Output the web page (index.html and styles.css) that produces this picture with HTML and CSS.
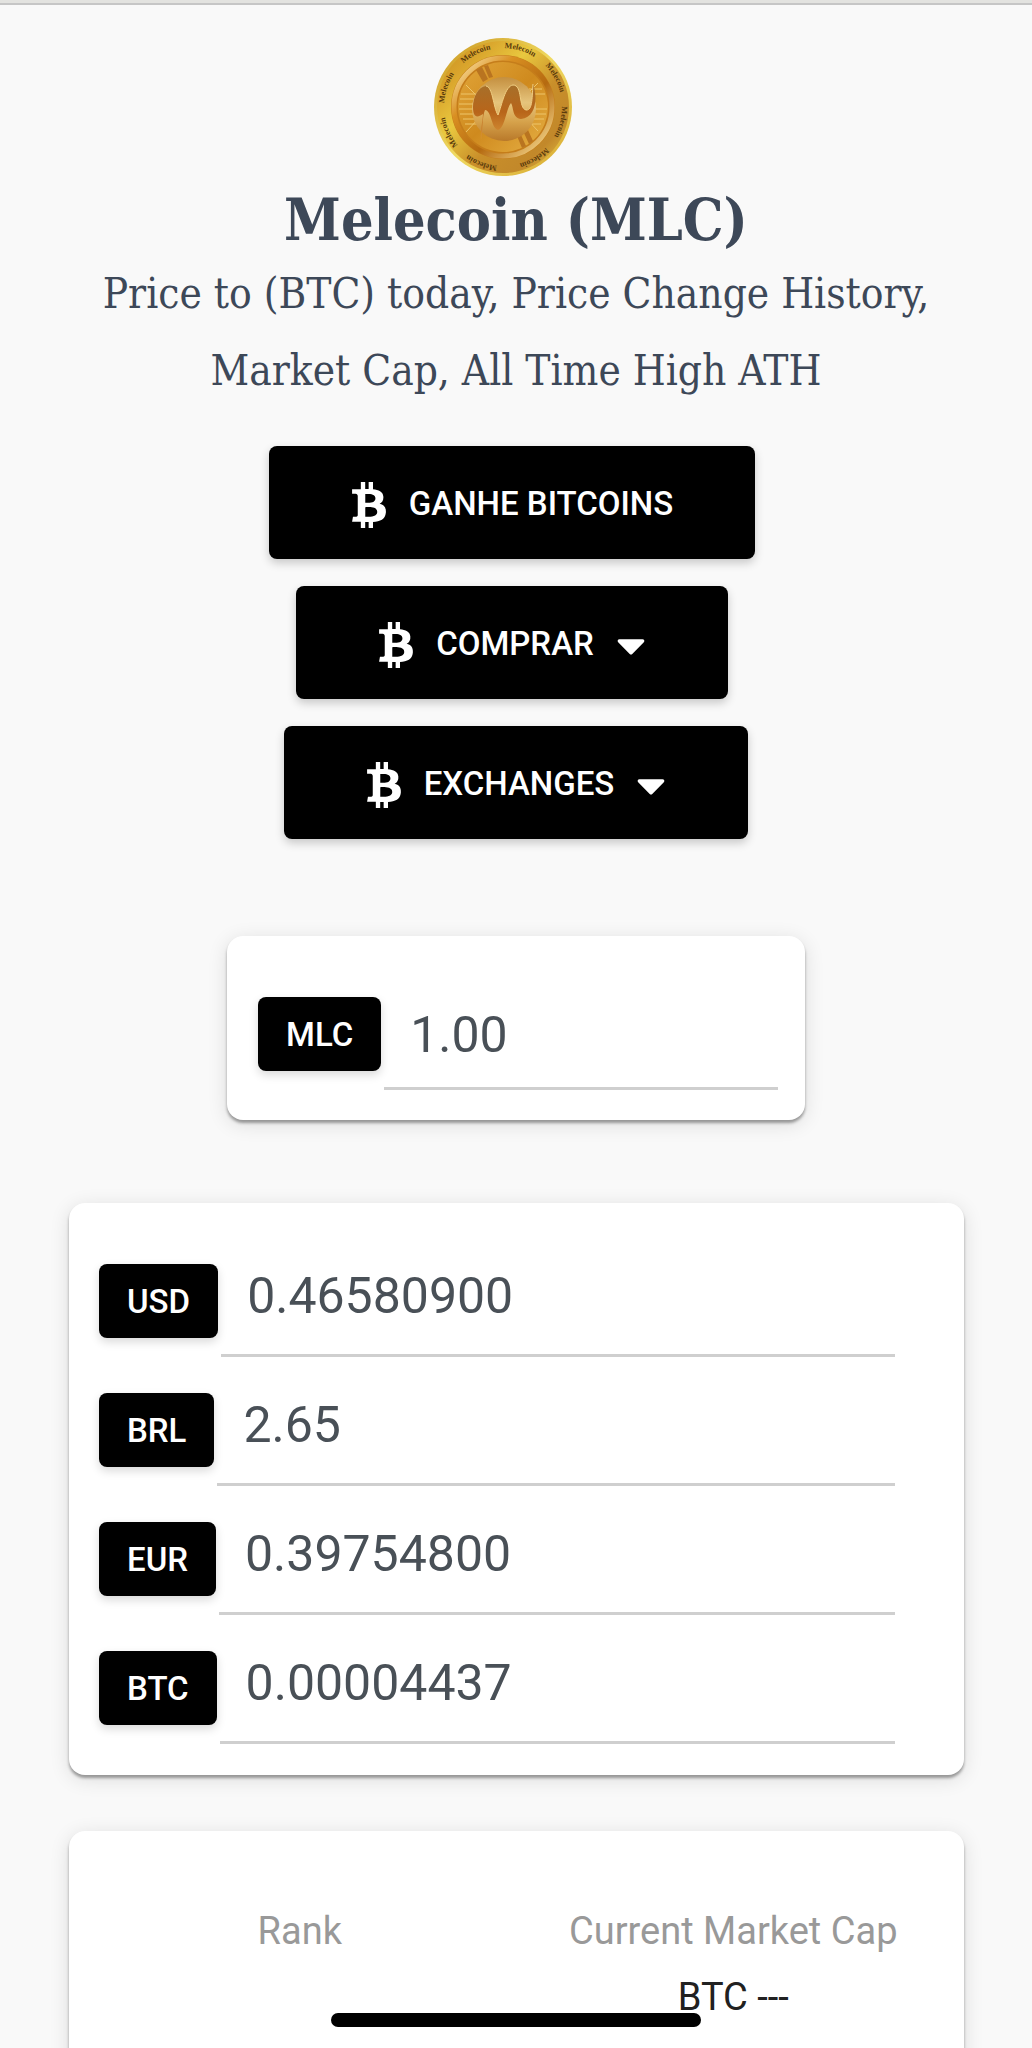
FILE: index.html
```html
<!DOCTYPE html>
<html lang="en">
<head>
<meta charset="utf-8">
<meta name="viewport" content="width=device-width, initial-scale=1">
<title>Melecoin (MLC)</title>
<link rel="stylesheet" href="styles.css">
</head>
<body>
<svg class="defs" aria-hidden="true">
  <symbol id="btc" viewBox="0 0 384 512"><path d="M310.204 242.638c27.73-14.18 45.377-39.39 41.28-81.3-5.358-57.351-52.458-76.573-114.85-81.929V0h-48.528v77.203c-12.605 0-25.525.315-38.444.63V0h-48.528v79.409c-17.842.539-38.622.276-97.37 0v51.678c38.314-.678 58.417-3.14 63.023 21.427v217.429c-2.925 19.492-18.524 16.685-53.255 16.071L3.765 443.68c88.481 0 97.37.315 97.37.315V512h48.528v-67.06c13.234.315 26.154.315 38.444.315V512h48.528v-68.005c81.299-4.412 135.647-24.894 142.895-101.467 5.671-61.446-23.32-88.862-69.326-99.89zM150.608 134.553c27.415 0 113.126-8.507 113.126 48.528 0 54.515-85.71 48.212-113.126 48.212v-96.74zm0 251.776V279.821c32.772 0 133.127-9.138 133.127 53.255-.001 60.186-100.355 53.253-133.127 53.253z"/></symbol>
  <symbol id="caret" viewBox="0 0 320 512"><path d="M31.3 192h257.3c17.8 0 26.7 21.5 14.1 34.1L174.1 354.8c-7.8 7.8-20.5 7.8-28.3 0L17.2 226.1C4.6 213.5 13.5 192 31.3 192z"/></symbol>
</svg>
<div class="topline"></div>
<header class="hero">
  <svg class="coin" viewBox="0 0 140 140" role="img" aria-label="Melecoin">
    <defs>
      <linearGradient id="rim" x1="0" y1="0" x2="1" y2="1">
        <stop offset="0" stop-color="#c48a1c"/><stop offset=".2" stop-color="#d9a42c"/><stop offset=".38" stop-color="#e9c83f"/><stop offset=".6" stop-color="#c98f2a"/><stop offset=".8" stop-color="#c2882a"/><stop offset="1" stop-color="#ecd04a"/>
      </linearGradient>
      <linearGradient id="edge" x1="0" y1="0" x2="1" y2="1">
        <stop offset="0" stop-color="#c8931d"/><stop offset=".5" stop-color="#f0da62"/><stop offset="1" stop-color="#d6a52c"/>
      </linearGradient>
      <linearGradient id="ring" x1="0" y1="0" x2="1" y2="1">
        <stop offset="0" stop-color="#fff0b8"/><stop offset=".3" stop-color="#d98f22"/><stop offset=".6" stop-color="#b56a10"/><stop offset="1" stop-color="#ffe9a0"/>
      </linearGradient>
      <linearGradient id="face" x1="0" y1="0" x2="1" y2="1">
        <stop offset="0" stop-color="#e2a63a"/><stop offset=".5" stop-color="#cf8a1e"/><stop offset="1" stop-color="#e6b045"/>
      </linearGradient>
      <linearGradient id="disc" x1="0" y1="0" x2="0" y2="1">
        <stop offset="0" stop-color="#c48f3f"/><stop offset=".4" stop-color="#e6c47c"/><stop offset=".7" stop-color="#d6a24b"/><stop offset="1" stop-color="#b9792a"/>
      </linearGradient>
      <linearGradient id="wave" x1="0" y1="0" x2="0" y2="1">
        <stop offset="0" stop-color="#a6702a"/><stop offset=".5" stop-color="#b8651a"/><stop offset="1" stop-color="#d9963a"/>
      </linearGradient>
      <path id="orbit" d="M70 129A59 59 0 1 1 70 11A59 59 0 1 1 70 129"/>
    </defs>
    <circle cx="70" cy="70" r="69" fill="url(#edge)"/>
    <circle cx="70" cy="70" r="66" fill="url(#rim)"/>
    <circle cx="70" cy="70" r="52" fill="#c57d1a"/>
    <circle cx="70" cy="70" r="49" fill="none" stroke="url(#ring)" stroke-width="5"/>
    <circle cx="70" cy="70" r="45" fill="url(#face)"/>
    <path d="M27 62h18M26 67h16M26 72h16M27 77h16M28 57h18M30 82h14M32 87h14M96 52h13M98 57h14M99 72h15M98 77h15M97 82h14M95 87h13M33 48l14 14M33 95l13-14M105 46L91 60M105 94L92 80" stroke="#edc56b" stroke-width="1" fill="none"/>
    <path d="M43 33l6-3 6 12-5 3zM51 29l4-1 5 12-4 1zM84 99l4-1 5 11-4 2zM91 96l4-3 5 11-4 3z" fill="#b97420"/>
    <circle cx="71" cy="72" r="32" fill="url(#disc)"/>
    <path d="M48 103C47 92 50 84 50 77C43 82 40 79 40 70C40 60 45 50 53 49C60 50 60 70 65 78C69 68 72 49 80 48C90 48 85 71 93 73C100 74 99 58 100 47C105 60 103 81 88 82C79 81 81 71 78 66C73 72 72 91 65 93C58 91 59 74 52 73C49 80 50 92 48 103Z" fill="url(#wave)"/>
    <path d="M53 49C60 50 60 70 65 78C69 68 72 49 80 48C90 48 85 71 93 73C100 74 99 58 100 47" fill="none" stroke="#f0ce83" stroke-width="1"/>
    <text class="coin-text"><textPath href="#orbit" startOffset="6">Melecoin&#8195;&#160;&#160;&#160;Melecoin&#8195;&#160;&#160;&#160;Melecoin&#8195;&#160;&#160;&#160;Melecoin&#8195;&#160;&#160;&#160;Melecoin&#8195;&#160;&#160;&#160;Melecoin&#8195;&#160;&#160;&#160;Melecoin&#8195;&#160;&#160;&#160;Melecoin</textPath></text>
  </svg>
  <h1 class="title">Melecoin (MLC)</h1>
  <p class="subtitle">Price to (BTC) today, Price Change History, Market Cap, All Time High ATH</p>
  <div class="actions">
    <button class="action" type="button"><svg class="icon-btc"><use href="#btc"/></svg>GANHE BITCOINS</button>
    <button class="action" type="button"><svg class="icon-btc"><use href="#btc"/></svg>COMPRAR<svg class="icon-caret"><use href="#caret"/></svg></button>
    <button class="action action-last" type="button"><svg class="icon-btc"><use href="#btc"/></svg>EXCHANGES<svg class="icon-caret"><use href="#caret"/></svg></button>
  </div>
</header>
<main>
  <section class="card card-source">
    <div class="row"><label class="chip" for="mlc">MLC</label><input class="value" id="mlc" value="1.00"></div>
  </section>
  <section class="card card-rates">
    <div class="row"><label class="chip" for="usd">USD</label><input class="value" id="usd" value="0.46580900"></div>
    <div class="row"><label class="chip" for="brl">BRL</label><input class="value" id="brl" value="2.65"></div>
    <div class="row"><label class="chip" for="eur">EUR</label><input class="value" id="eur" value="0.39754800"></div>
    <div class="row"><label class="chip" for="btc-value">BTC</label><input class="value" id="btc-value" value="0.00004437"></div>
  </section>
  <section class="card card-stats">
    <dl class="stat"><dt>Rank</dt></dl>
    <dl class="stat"><dt>Current Market Cap</dt><dd>BTC ---</dd></dl>
  </section>
</main>
<div class="home-bar"></div>
</body>
</html>
```
FILE: styles.css
```css
* { box-sizing: border-box; }

html { overflow: hidden; }

body {
  margin: 0;
  height: 100vh;
  overflow: hidden;
  background: #f9f9f9;
  font-family: Roboto, "Liberation Sans", sans-serif;
}

.defs { position: absolute; width: 0; height: 0; }

.topline {
  height: 5px;
  background: #e3e3e0;
  border-bottom: 2px solid #c6c6c6;
}

.hero {
  display: flex;
  flex-direction: column;
  align-items: center;
  padding: 32px 68px 0;
}

.coin { width: 140px; height: 140px; margin-right: 26px; }

.coin-text {
  font-family: "Liberation Serif", serif;
  font-size: 8px;
  font-weight: 700;
  fill: #5a3a0c;
}

.title, .subtitle {
  margin: 0;
  color: #3d4858;
  font-family: "Roboto Slab", "DejaVu Serif Condensed", "DejaVu Serif", serif;
  text-align: center;
}

.title { margin-top: 8px; font-size: 57px; line-height: 70px; }

.subtitle { font-size: 42px; line-height: 77px; }

.actions {
  display: flex;
  flex-direction: column;
  align-items: center;
  gap: 27px;
  margin-top: 37px;
}

.action {
  display: flex;
  align-items: center;
  gap: 22px;
  height: 113px;
  margin-right: 8px;
  padding: 2px 82px 0;
  border: 0;
  border-radius: 8px;
  background: #000;
  color: #fff;
  font: 500 33px Roboto, "Liberation Sans", sans-serif;
  box-shadow: 0 4px 10px rgba(0, 0, 0, .2);
}

.action-last { margin-right: 0; }

.icon-btc, .icon-caret {
  height: 46px;
  margin-top: 2px;
  fill: currentColor;
}

.icon-btc { width: 36px; }

.icon-caret { width: 30px; }

.card {
  margin: 0 68px 0 69px;
  border-radius: 16px;
  background: #fff;
  box-shadow: 0 3px 3px rgba(0, 0, 0, .35), 0 4px 20px rgba(0, 0, 0, .12);
}

.card-source { width: 56%; margin: 97px auto 0; padding: 36px 27px 30px 31px; }

.card-rates { margin-top: 83px; padding: 36px 69px 20px 30px; }

.row { display: flex; gap: 3px; align-items: flex-start; }

.card-rates .row { height: 129px; }

.chip {
  height: 74px;
  margin-top: 25px;
  padding: 0 28px;
  border-radius: 8px;
  background: #000;
  color: #fff;
  font-size: 33px;
  font-weight: 500;
  line-height: 76px;
  box-shadow: 0 4px 10px rgba(0, 0, 0, .15);
}

.value {
  flex: 1;
  min-width: 0;
  height: 118px;
  padding: 10px 26px 0;
  border: 0;
  border-bottom: 3px solid #cfcfcf;
  background: none;
  color: #495057;
  font: 400 50px Roboto, "Liberation Sans", sans-serif;
  outline: 0;
}

.card-rates .value { padding: 0 26px 1px; }

.card-stats {
  display: grid;
  grid-template-columns: 1fr 1fr;
  margin-top: 56px;
  padding: 67px 14px;
  text-align: center;
  font-size: 38px;
  line-height: 66px;
}

.stat { margin: 0; }

.stat dt { color: #999; }

.stat dd { margin: 0; color: #212121; }

.home-bar {
  position: fixed;
  bottom: 21px;
  left: 50%;
  width: 370px;
  height: 14px;
  border-radius: 7px;
  background: #000;
  transform: translateX(-50%);
}
```
